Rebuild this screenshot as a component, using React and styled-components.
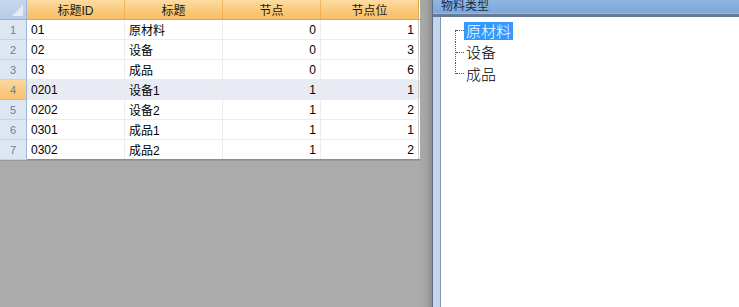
import React from "react";
import styled, { createGlobalStyle } from "styled-components";

const GlobalStyle = createGlobalStyle`
  html, body {
    margin: 0;
    padding: 0;
    overflow: hidden;
  }
  body {
    font-family: "Liberation Sans", "Noto Sans CJK SC", sans-serif;
    font-size: 12px;
    color: #000;
  }
`;

const rows = [
  { id: "01", title: "原材料", node: 0, pos: 1 },
  { id: "02", title: "设备", node: 0, pos: 3 },
  { id: "03", title: "成品", node: 0, pos: 6 },
  { id: "0201", title: "设备1", node: 1, pos: 1 },
  { id: "0202", title: "设备2", node: 1, pos: 2 },
  { id: "0301", title: "成品1", node: 1, pos: 1 },
  { id: "0302", title: "成品2", node: 1, pos: 2 },
];

const treeItems = ["原材料", "设备", "成品"];

export default function App() {
  return (
    <>
      <GlobalStyle />
      <Page>
        <GridArea>
          <Grid>
            <HeaderRow>
              <Corner>
                <CornerMark />
              </Corner>
              <HeadCell>标题ID</HeadCell>
              <HeadCell>标题</HeadCell>
              <HeadCell>节点</HeadCell>
              <HeadCell>节点位</HeadCell>
            </HeaderRow>
            {rows.map((r, i) => (
              <Row key={r.id} current={i === 3}>
                <RowHead current={i === 3}>{i + 1}</RowHead>
                <Cell>{r.id}</Cell>
                <Cell>{r.title}</Cell>
                <Cell right>{r.node}</Cell>
                <Cell right>{r.pos}</Cell>
              </Row>
            ))}
          </Grid>
          <GridShadow />
        </GridArea>
        <Splitter />
        <Panel>
          <PanelTitle>物料类型</PanelTitle>
          <TreeBox>
            <Tree>
              {treeItems.map((t, i) => (
                <TreeNode
                  key={t}
                  first={i === 0}
                  last={i === treeItems.length - 1}
                >
                  <Branch />
                  <NodeLabel selected={i === 0}>{t}</NodeLabel>
                </TreeNode>
              ))}
            </Tree>
          </TreeBox>
        </Panel>
      </Page>
    </>
  );
}

const Page = styled.div`
  display: flex;
  width: 739px;
  height: 307px;
  background: #ababab;
`;

const GridArea = styled.div`
  display: flex;
  width: 432px;
  align-items: flex-start;
  background: #ababab;
`;

const Grid = styled.div`
  width: 420px;
  background: #fff;
  border-bottom: 1px solid #8c8c8c;
  box-shadow: 0 1px 0 #9a9a9a;
`;

const GridShadow = styled.div`
  flex: 1;
  align-self: stretch;
  background: linear-gradient(to right, #a9a9a9 0%, #a5a5a5 50%, #8e8e8e 100%);
`;

const HeaderRow = styled.div`
  display: grid;
  grid-template-columns: 27px 98px 98px 98px 98px;
  height: 19px;
  border-bottom: 1px solid #e9a545;
`;

const Corner = styled.div`
  position: relative;
  background: linear-gradient(#c6d8ef, #b4cae6);
  border-right: 1px solid #9eb6d5;
`;

const CornerMark = styled.div`
  position: absolute;
  right: 3px;
  bottom: 3px;
  width: 0;
  height: 0;
  border-left: 11px solid transparent;
  border-bottom: 11px solid #e3ecf7;
`;

const HeadCell = styled.div`
  display: flex;
  align-items: center;
  justify-content: center;
  background: linear-gradient(#fcdca3, #f9c877 60%, #f7c068);
  border-right: 1px solid #f0b25a;
  font-size: 12px;
  color: #1a1a1a;
  &:last-child {
    border-right: 1px solid #e6a44c;
  }
`;

const Row = styled.div`
  display: grid;
  grid-template-columns: 27px 98px 98px 98px 98px;
  height: 19px;
  border-bottom: 1px solid #ececec;
  background: ${(p) => (p.current ? "#e8ebf4" : "#fff")};
  &:last-child {
    border-bottom: none;
  }
`;

const RowHead = styled.div`
  display: flex;
  align-items: center;
  justify-content: center;
  font-size: 11px;
  color: #6a7d99;
  background: ${(p) =>
    p.current ? "linear-gradient(#fbd69c, #f7c270)" : "#dde7f3"};
  border-right: 1px solid #9eb6d5;
  border-bottom: 1px solid ${(p) => (p.current ? "#efb35e" : "#c4d3e6")};
  margin-bottom: -1px;
`;

const Cell = styled.div`
  display: flex;
  align-items: center;
  justify-content: ${(p) => (p.right ? "flex-end" : "flex-start")};
  padding: 0 4px;
  border-right: 1px solid #ececec;
  font-size: 12px;
  white-space: nowrap;
  overflow: hidden;
  &:last-child {
    border-right: 1px solid #c9c9c9;
  }
`;

const Splitter = styled.div`
  width: 1px;
  background: #5f6f86;
`;

const Panel = styled.div`
  flex: 1;
  display: flex;
  flex-direction: column;
`;

const PanelTitle = styled.div`
  height: 14px;
  line-height: 12px;
  padding-left: 8px;
  overflow: hidden;
  font-size: 12px;
  color: #1e2b3c;
  background: linear-gradient(#8fb6e2, #79a6d9);
  border-bottom: 3px solid #687a93;
  box-shadow: inset 0 -1px 0 #a8b6c9;
`;

const TreeBox = styled.div`
  flex: 1;
  background: #fff;
  border-left: 7px solid #c5d6ec;
  box-shadow: inset 1px 0 0 #7f93ad;
  padding: 3px 0 0 15px;
`;

const Tree = styled.div`
  display: flex;
  flex-direction: column;
`;

const TreeNode = styled.div`
  position: relative;
  display: flex;
  align-items: center;
  height: 21.5px;
  padding-left: 9px;
  &::before {
    content: "";
    position: absolute;
    left: 0;
    top: ${(p) => (p.first ? "10px" : "0")};
    bottom: ${(p) => (p.last ? "auto" : "0")};
    height: ${(p) => (p.last ? "11px" : "auto")};
    border-left: 1px dotted #555;
  }
`;

const Branch = styled.span`
  position: absolute;
  left: 1px;
  top: 10px;
  width: 8px;
  border-top: 1px dotted #555;
`;

const NodeLabel = styled.span`
  font-family: "Noto Sans CJK SC", sans-serif;
  font-weight: 300;
  font-size: 15px;
  line-height: 18px;
  padding: 0 2px;
  color: ${(p) => (p.selected ? "#fff" : "#000")};
  background: ${(p) => (p.selected ? "#3399ff" : "transparent")};
`;
